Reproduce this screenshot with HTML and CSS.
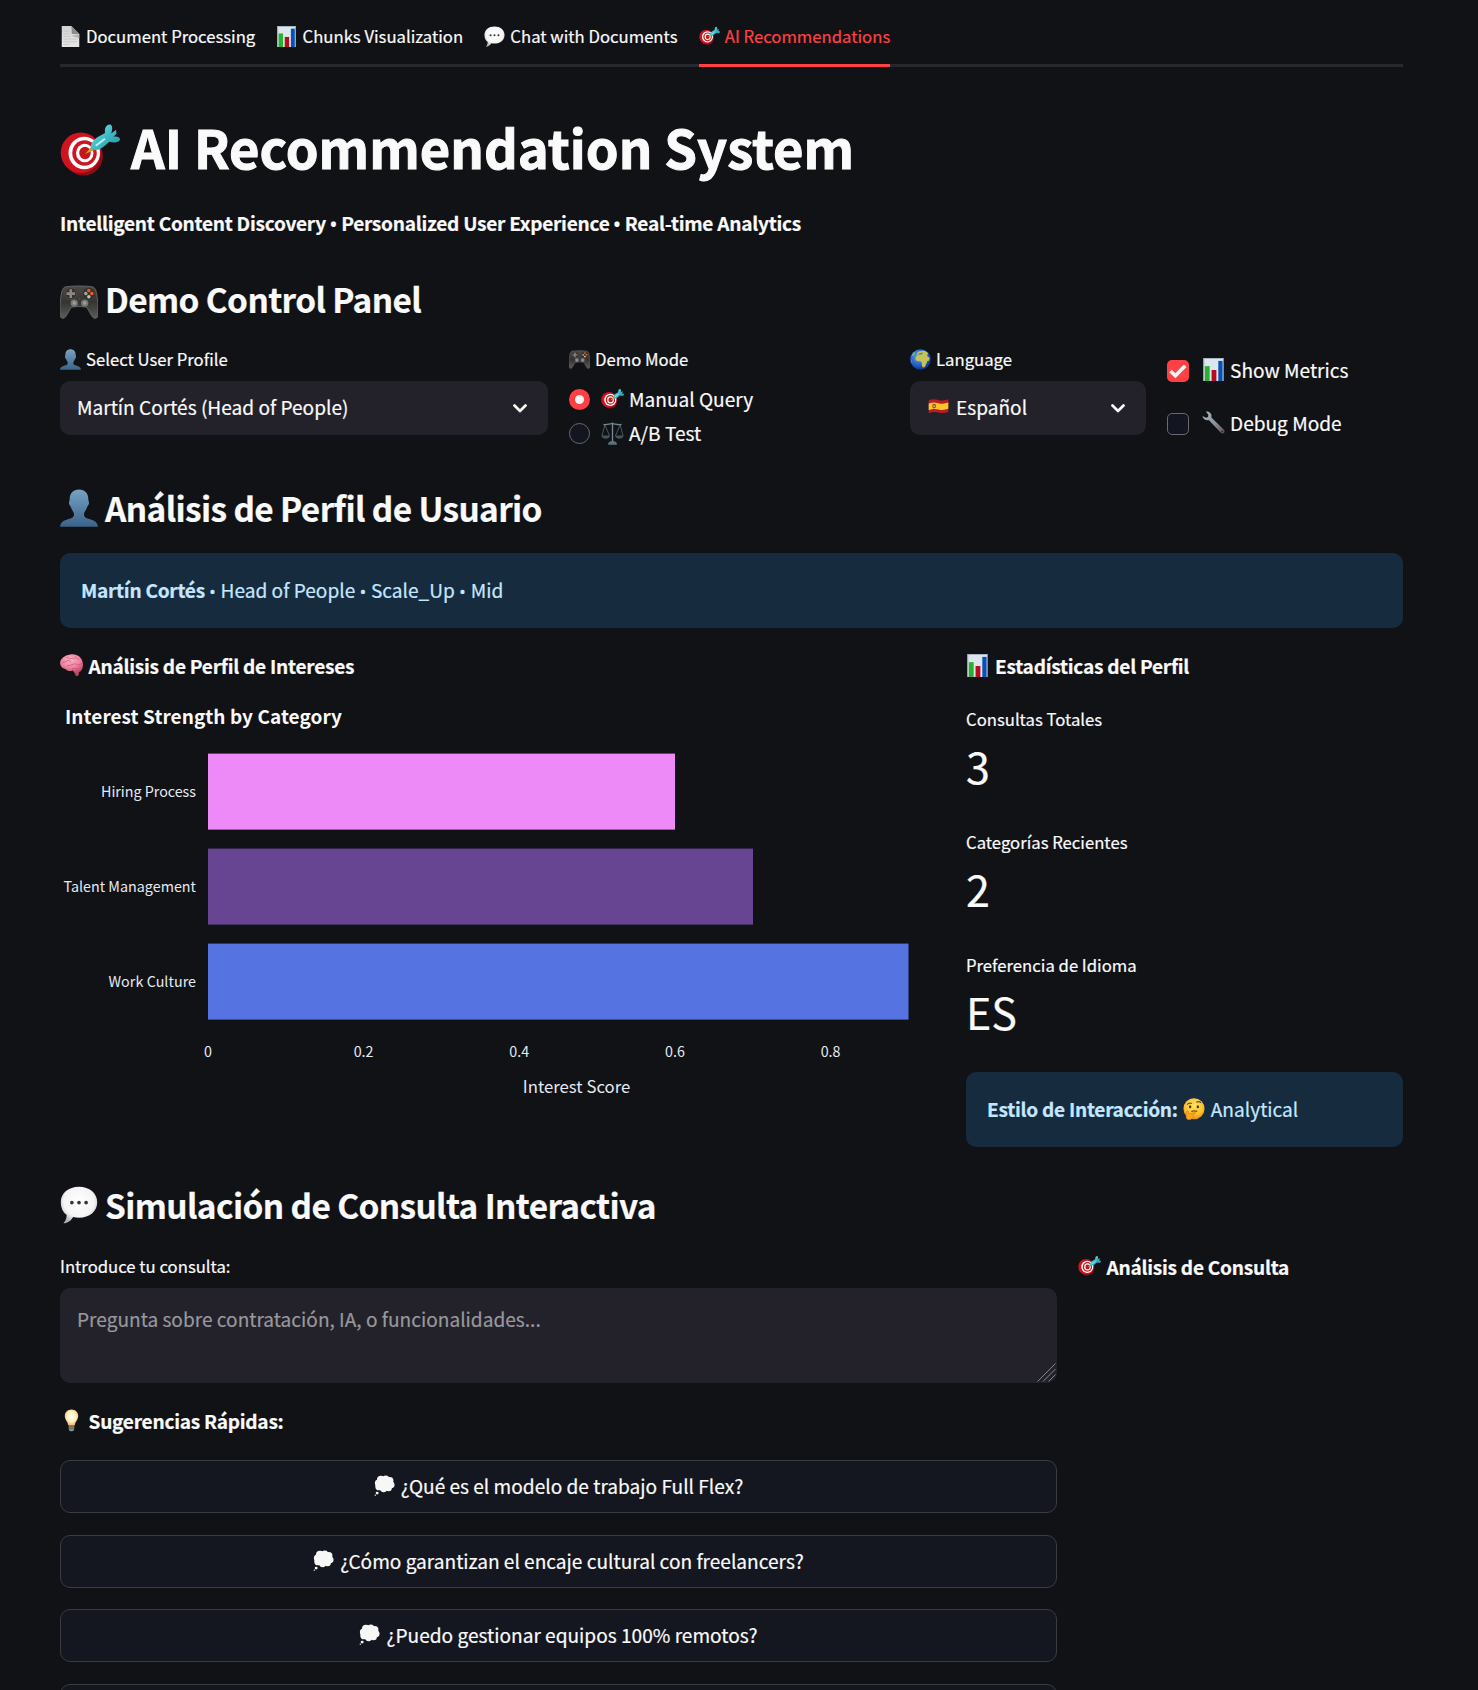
FILE: index.html
```html
<!DOCTYPE html>
<html lang="es">
<head>
<meta charset="utf-8">
<title>AI Recommendation System</title>
<link rel="stylesheet" href="styles.css">
</head>
<body>
<svg class="defs" aria-hidden="true">
  <defs>
    <linearGradient id="gPaper" x1="0" y1="0" x2="0" y2="1"><stop offset="0" stop-color="#d2d2d2"/><stop offset="1" stop-color="#e6e6e6"/></linearGradient>
    <linearGradient id="gMan" x1="0" y1="0" x2="0" y2="1"><stop offset="0" stop-color="#77a3c4"/><stop offset="1" stop-color="#3c6288"/></linearGradient>
    <radialGradient id="gWhite" cx=".5" cy=".4" r=".6"><stop offset="0" stop-color="#fff"/><stop offset=".7" stop-color="#f4f4f4"/><stop offset="1" stop-color="#b4b4b4"/></radialGradient>
    <linearGradient id="gPad" x1="0" y1="0" x2="0" y2="1"><stop offset="0" stop-color="#4a4b48"/><stop offset=".5" stop-color="#343533"/><stop offset="1" stop-color="#5c5d5a"/></linearGradient>
    <radialGradient id="gSea" cx=".4" cy=".35" r=".7"><stop offset="0" stop-color="#62a5ec"/><stop offset=".6" stop-color="#2460c8"/><stop offset="1" stop-color="#0e2c78"/></radialGradient>
    <radialGradient id="gFace" cx=".5" cy=".35" r=".65"><stop offset="0" stop-color="#ffe45c"/><stop offset=".7" stop-color="#fcc02d"/><stop offset="1" stop-color="#e88a18"/></radialGradient>
    <radialGradient id="gBulb" cx=".5" cy=".45" r=".6"><stop offset="0" stop-color="#fffef2"/><stop offset=".55" stop-color="#fff0c0"/><stop offset="1" stop-color="#e8b45c"/></radialGradient>
    <radialGradient id="gBrain" cx=".45" cy=".3" r=".7"><stop offset="0" stop-color="#fbb4c6"/><stop offset=".6" stop-color="#f0829f"/><stop offset="1" stop-color="#c2506f"/></radialGradient>
    <linearGradient id="gSteel" x1="0" y1="0" x2="1" y2="1"><stop offset="0" stop-color="#a9bac6"/><stop offset=".55" stop-color="#8693a0"/><stop offset="1" stop-color="#6c4a46"/></linearGradient>
    <linearGradient id="gDart" x1="0" y1="0" x2="1" y2="1"><stop offset="0" stop-color="#6fe3ea"/><stop offset="1" stop-color="#1593a5"/></linearGradient>
  </defs>
  <symbol id="doc" viewBox="0 0 24 24"><path d="M2 0h11l9 9v15H2z" fill="url(#gPaper)"/><path d="M13 0l9 9h-8.500z" fill="#8b8b8b"/><path d="M13 11l9-2v5z" fill="#b5b5b5"/><path d="M4 6h7M4 9h7M4 12h8M4 15h15M4 18h15M4 21h6" stroke="#c0c0c0" stroke-width=".8"/></symbol>
  <symbol id="bars" viewBox="0 0 24 24"><path d="M1.500 0h21v24h-21z" fill="#dbe6ef"/><path d="M1.500 0h1v24h-1zM1.500 0h21v1h-21z" fill="#a7b4c0"/><path d="M3 8.500h5V24H3z" fill="#27b22e"/><path d="M10 12.500h5V24h-5z" fill="#b70c20"/><path d="M17 3h4.500v21H17z" fill="#0a50b4"/></symbol>
  <symbol id="bubble" viewBox="0 0 24 24"><path d="M12 .5c6.600 0 11.500 4 11.500 9.700S18.800 20 12 20c-1.300 0-2.600-.1-3.700-.4C7 22 4.600 23.500 2.200 23.600c1.300-1.400 2-3.200 2-5.300C1.800 16.500.5 13.800.5 10.200.5 4.500 5.400.5 12 .5z" fill="url(#gWhite)"/><circle cx="7.500" cy="10.500" r="1.150" fill="#333"/><circle cx="12" cy="10.500" r="1.150" fill="#333"/><circle cx="16.500" cy="10.500" r="1.150" fill="#333"/></symbol>
  <symbol id="target" viewBox="0 0 24 24"><ellipse cx="9.200" cy="13.300" rx="7.900" ry="8.200" transform="rotate(-25 9.200 13.300)" fill="#8c0d16"/><ellipse cx="8.300" cy="12.300" rx="8" ry="8.100" fill="#d0141f"/><ellipse cx="9.700" cy="12.400" rx="6.300" ry="6.500" fill="#fff"/><ellipse cx="9.800" cy="12.400" rx="4.900" ry="5.100" fill="#cc1721"/><ellipse cx="9.900" cy="12.400" rx="3.500" ry="3.700" fill="#fff"/><ellipse cx="10" cy="12.400" rx="2.300" ry="2.500" fill="#c4161f"/><path d="M10 12.800l3-3.300 1.400 1.500z" fill="#d79a23"/><path d="M12.300 11c-.3-2 1-4 3-5.100l2.700-1.500C17.700 2.500 18.500.8 20.200 1c.9.500.8 2 .3 3.600l1.900-1.500.2 1.600-1.200 1.200c1.500-.3 2.700.2 2.600 1.200-.5 1.200-2.300 1.300-4.300.8l-1.800 1.600c-1.500 1.400-3.400 2.100-5.600 1.500z" fill="url(#gDart)"/><path d="M14.300 9.500l3.700-2.800" stroke="#b7f5f5" stroke-width=".8"/></symbol>
  <symbol id="pad" viewBox="0 0 24 24"><path d="M3.200 2.500C7 1.700 17 1.700 20.800 2.500c1.300.5 2 2 2.400 4.500.6 4 .9 8.500.8 12.500 0 3.300-2.600 3.700-4 1.200l-3-5.200c-1.400-.8-8.600-.8-10 0l-3 5.200c-1.400 2.500-4 2.100-4-1.200-.1-4 .2-8.500.8-12.500.4-2.500 1.100-4 2.400-4.500z" fill="url(#gPad)" stroke="#6d6e6b" stroke-width=".5"/><circle cx="6.800" cy="6.700" r="3.700" fill="#343330" stroke="#68463b" stroke-width=".5"/><path d="M6.800 4v5.400M4.100 6.700h5.400" stroke="#888986" stroke-width="1.600"/><circle cx="18.200" cy="6.700" r="3.700" fill="#343330"/><circle cx="18.200" cy="4.700" r="1.100" fill="#f4571c"/><circle cx="20.100" cy="6.700" r="1.100" fill="#ff5a1c"/><circle cx="16.300" cy="6.700" r="1.100" fill="#a6a6a4"/><circle cx="18.200" cy="8.700" r="1.100" fill="#c2c2c0"/><circle cx="9" cy="12.700" r="2.300" fill="#777875"/><circle cx="15.600" cy="12.700" r="2.300" fill="#777875"/><circle cx="9" cy="12.700" r="1.100" fill="#9c9d9a"/><circle cx="15.600" cy="12.700" r="1.100" fill="#9c9d9a"/><circle cx="12.300" cy="10" r=".6" fill="#9c3c1c"/></symbol>
  <symbol id="man" viewBox="0 0 24 24"><path d="M12 .3c3.700 0 5.900 2.400 5.900 6.200 0 1.300.6 1.500.4 2.800-.2 1-.9 1.200-1.200 2.200-.5 1.700-1.500 2.700-1.800 3.700-.4 1.700.2 2.900 2 3.500 3.500 1 6.200 1.600 6.700 5.100H0c.5-3.500 3.200-4.100 6.700-5.100 1.800-.6 2.400-1.800 2-3.500-.3-1-1.300-2-1.800-3.700-.3-1-1-1.200-1.200-2.200-.2-1.300.4-1.500.4-2.800C6.100 2.700 8.300.3 12 .3z" fill="url(#gMan)"/></symbol>
  <symbol id="globe" viewBox="0 0 24 24"><circle cx="12" cy="12" r="11.800" fill="url(#gSea)"/><path d="M8 4.500c2-2 6-2.800 9-2.200 1.600.7 3 1.700 4 3l-1.500 1.300.5 2 2.500 1.400-.8 3.300-2 .3c.2 1.500-1 2.500-1.500 4-.6 2-1.800 3.600-3.300 3.500-1.300-1-1.500-3.500-1.500-5.500-.6-1.500-2-1.800-3.500-1.600C7.600 14 6 12.500 6.200 10.500c.3-1.500 1.500-2.400 2.400-3.300z" fill="#c4c25a"/><path d="M10 5c2-.8 3.500-1 5-.6l-1.500 2-4 .4z" fill="#4f9860"/><path d="M2 7c.8-1.500 1.800-2.600 3-3.600L6 5 3.500 8zM1 12l1.300 2 .2 3z" fill="#89b27c"/></symbol>
  <symbol id="flag" viewBox="0 0 24 24"><path d="M.8 5C5 3.200 8 3.500 12 4.500s7.500.7 11.200-.7v14.400c-3.700 1.400-7.200 1.700-11.200.7S5 18 .8 19.700z" fill="#b81d23"/><path d="M.8 8.600c4.200-1.700 7.200-1.400 11.200-.4s7.500.7 11.200-.7v7.200c-3.700 1.400-7.200 1.700-11.200.7S5 14.400.8 16.100z" fill="#f7c52a"/><ellipse cx="7" cy="11.500" rx="2.200" ry="2.700" fill="#a84a2c"/><path d="M6 10.500h2v2H6z" fill="#d6a27a"/></symbol>
  <symbol id="scale" viewBox="0 0 24 24"><g fill="none" stroke="#5b6d77" stroke-width=".8"><path d="M4 3L1 14.500M4 3l5 11.500M20 3l-5 11.500M20 3l3 11.500"/><path d="M2.500 2.500C6 3.500 9 1.500 12 1.800s6 1.700 9.500.7" stroke="#758690" stroke-width="1.300"/></g><path d="M.3 14.200h9.200c-.8 2.800-2.500 3.300-4.600 3.300S1 17 .3 14.200zM14.500 14.200h9.200c-.8 2.800-2.500 3.300-4.600 3.300s-3.800-.5-4.600-3.300z" fill="#43545e"/><path d="M11.300.5h1.400v19.800h-1.400z" fill="#778994"/><path d="M7.500 22.200c1-2 3-2.300 4.500-2.300s3.500.3 4.500 2.300v1.500h-9z" fill="#5c707c"/></symbol>
  <symbol id="wrench" viewBox="0 0 24 24"><path d="M4.200.8c2.200-.8 5.600 1.200 5.800 4.200l-.2 1.700L22.600 19.400c1.700 1.700.8 4-1.200 4-.9 0-1.500-.4-2-.9L7 9.300c-2.500.8-5.800-.5-6.500-4.200L4 7l2.300-.7L6.600 4z" fill="url(#gSteel)"/><circle cx="21.100" cy="21.300" r=".9" fill="#2a2225"/></symbol>
  <symbol id="brain" viewBox="0 0 24 24"><path d="M14 17.500l6 1-.5 3.500c-1 1.500-3 1.500-3.500 0z" fill="#a84a60"/><path d="M10.500.6c7-1.300 12.800 2.800 13.400 9.500.4 5.500-2 9-5.800 9.300-2.700.5-3.600-.9-4.800-2.300C10 18.600 7.200 17.500 6 15.800 2.300 15.400.1 12.400.1 9.500.2 5 4.700 1.500 10.500.6z" fill="url(#gBrain)"/><path d="M2 9.500c2-2 3.500-.5 5-2s3.500-1 4.300 1.200M6.500 3.500c2 0 2.500 2 4.500 1.500s3-1 4.500.7M7 13c2-2 4-.5 5.500-1.700s3.500-1.500 5.500-.4 3.500-.7 4.500-1.200M12.500 15c2 1 4.500-.6 6 .7M15.500 2.500c.3 2 2.500 1.800 4 3.200" fill="none" stroke="#c85778" stroke-width=".8"/></symbol>
  <symbol id="think" viewBox="0 0 24 24"><circle cx="12" cy="11.700" r="11.500" fill="url(#gFace)"/><path d="M4.500 7.200c1-1.500 3.200-1.900 5.300-1.300M14.500 4.500c2-.9 3.800-.6 5.200.7" fill="none" stroke="#7b4817" stroke-width="1.200"/><ellipse cx="7.800" cy="9.500" rx="1.300" ry="1.700" fill="#573016"/><ellipse cx="16.200" cy="9.500" rx="1.300" ry="1.700" fill="#573016"/><path d="M9 14.800c2.500-1.200 4.500-.9 6.500-.2" stroke="#7b4817" stroke-width="1.200" fill="none"/><path d="M4 14.500c.8-1.200 1.800-.6 2 .5l.5 2.500 6-1.900c1.400-.3 1.800 1.200.6 1.700l-2.700 1.200c1.500.2 1.700 1.200.8 2.100-1.500 2.500-3.800 3.700-6 2.900-2.200-1-2.200-4-1.200-9z" fill="#f8a51f" stroke="#d87513" stroke-width=".5"/></symbol>
  <symbol id="bulb" viewBox="0 0 24 24"><path d="M8.800 15.500h6.400l-.5 6.500c-.9 1.700-4.500 1.700-5.400 0z" fill="#8d8b86"/><path d="M9 18h6M9.200 20.200h5.600" stroke="#4c4b49" stroke-width=".7"/><path d="M12 .5c4.200 0 7 3 7 6.700 0 4-3.200 5.800-3.500 9.600h-7C8.200 13 5 11.200 5 7.200 5 3.500 7.800.5 12 .5z" fill="url(#gBulb)"/></symbol>
  <symbol id="cloud" viewBox="0 0 24 24"><g fill="#f7f7f7"><circle cx="8" cy="5.500" r="4.600"/><circle cx="13.500" cy="4.500" r="4"/><circle cx="18" cy="6.500" r="4.200"/><circle cx="19.600" cy="11.200" r="3.900"/><circle cx="16.500" cy="14.700" r="4"/><circle cx="11" cy="15.800" r="3.900"/><circle cx="6" cy="13" r="4.500"/><circle cx="5" cy="9" r="4"/><circle cx="12.500" cy="10" r="6"/><circle cx="3.600" cy="20.700" r="1.700"/><circle cx="1.500" cy="23" r=".8"/></g></symbol>
  <symbol id="chev" viewBox="0 0 14 9"><path d="M1.500 1.500L7 7l5.500-5.500" fill="none" stroke="#fafafa" stroke-width="2.700" stroke-linecap="round" stroke-linejoin="round"/></symbol>
</svg>

<main class="page">
  <nav class="tabs">
    <a class="tab"><svg class="ico"><use href="#doc"/></svg><span>Document Processing</span></a>
    <a class="tab chunks"><svg class="ico"><use href="#bars"/></svg><span>Chunks Visualization</span></a>
    <a class="tab"><svg class="ico"><use href="#bubble"/></svg><span>Chat with Documents</span></a>
    <a class="tab active"><svg class="ico"><use href="#target"/></svg><span>AI Recommendations</span></a>
  </nav>

  <h1 class="title"><svg class="ico"><use href="#target"/></svg><span>AI Recommendation System</span></h1>
  <p class="tagline">Intelligent Content Discovery <i class="dot">•</i> Personalized User Experience <i class="dot">•</i> Real-time Analytics</p>

  <h2 class="section demo"><svg class="ico"><use href="#pad"/></svg><span>Demo Control Panel</span></h2>
  <div class="controls">
    <div class="field">
      <label class="label"><svg class="ico"><use href="#man"/></svg><span>Select User Profile</span></label>
      <div class="select"><span>Martín Cortés (Head of People)</span><svg class="chev"><use href="#chev"/></svg></div>
    </div>
    <div class="field">
      <label class="label"><svg class="ico"><use href="#pad"/></svg><span>Demo Mode</span></label>
      <div class="radios">
        <div class="option"><i class="radio on"></i><svg class="ico"><use href="#target"/></svg><span>Manual Query</span></div>
        <div class="option"><i class="radio"></i><svg class="ico"><use href="#scale"/></svg><span>A/B Test</span></div>
      </div>
    </div>
    <div class="field">
      <label class="label"><svg class="ico"><use href="#globe"/></svg><span>Language</span></label>
      <div class="select"><svg class="ico flag"><use href="#flag"/></svg><span>Español</span><svg class="chev"><use href="#chev"/></svg></div>
    </div>
    <div class="checks">
      <div class="option"><i class="check on"><svg viewBox="0 0 21 21"><path d="M3.300 10.500l4.700 4.500L17.300 5.500" fill="none" stroke="#f4f4f6" stroke-width="3.500"/></svg></i><svg class="ico"><use href="#bars"/></svg><span>Show Metrics</span></div>
      <div class="option"><i class="check"></i><svg class="ico"><use href="#wrench"/></svg><span>Debug Mode</span></div>
    </div>
  </div>

  <h2 class="section analysis"><svg class="ico"><use href="#man"/></svg><span>Análisis de Perfil de Usuario</span></h2>
  <div class="info"><p><b>Martín Cortés</b> <i class="dot">•</i> Head of People <i class="dot">•</i> Scale_Up <i class="dot">•</i> Mid</p></div>

  <div class="profile">
    <section class="interests">
      <h3 class="sub"><svg class="ico"><use href="#brain"/></svg><span>Análisis de Perfil de Intereses</span></h3>
      <svg class="chart" width="885" height="430" viewBox="60 690 885 430">
        <text class="chart-title" x="65" y="724" textLength="277">Interest Strength by Category</text>
        <rect x="208" y="753.600" width="467" height="76" fill="#ee8af7"/>
        <rect x="208" y="848.600" width="545" height="76" fill="#684593"/>
        <rect x="208" y="943.600" width="700.500" height="76" fill="#5674e1"/>
        <g class="axis" text-anchor="end">
          <text x="196" y="797" textLength="95">Hiring Process</text>
          <text x="196" y="892" textLength="132.500">Talent Management</text>
          <text x="196" y="987" textLength="87.500">Work Culture</text>
        </g>
        <g class="axis" text-anchor="middle">
          <text x="208" y="1057">0</text><text x="363.600" y="1057">0.2</text><text x="519.300" y="1057">0.4</text><text x="675" y="1057">0.6</text><text x="830.600" y="1057">0.8</text>
          <text class="axis-title" x="576.500" y="1093" textLength="107.500">Interest Score</text>
        </g>
      </svg>
    </section>
    <section class="stats">
      <h3 class="sub"><svg class="ico"><use href="#bars"/></svg><span>Estadísticas del Perfil</span></h3>
      <div class="metric"><div class="label">Consultas Totales</div><div class="value">3</div></div>
      <div class="metric"><div class="label">Categorías Recientes</div><div class="value">2</div></div>
      <div class="metric"><div class="label">Preferencia de Idioma</div><div class="value">ES</div></div>
      <div class="info style"><b>Estilo de Interacción:</b><svg class="ico"><use href="#think"/></svg><span>Analytical</span></div>
    </section>
  </div>

  <h2 class="section query"><svg class="ico"><use href="#bubble"/></svg><span>Simulación de Consulta Interactiva</span></h2>
  <div class="ask">
    <section class="ask-main">
      <label class="label">Introduce tu consulta:</label>
      <div class="textarea"><span>Pregunta sobre contratación, IA, o funcionalidades...</span><svg class="grip" viewBox="0 0 19 19"><path d="M.5 18.500l18-18M6 18.500L18.500 6M11.500 18.500l7-7" stroke="#85858a" stroke-width="1"/></svg></div>
      <h3 class="sub quick"><svg class="ico"><use href="#bulb"/></svg><span>Sugerencias Rápidas:</span></h3>
      <div class="suggestions">
        <button><svg class="ico"><use href="#cloud"/></svg><span>¿Qué es el modelo de trabajo Full Flex?</span></button>
        <button><svg class="ico"><use href="#cloud"/></svg><span>¿Cómo garantizan el encaje cultural con freelancers?</span></button>
        <button><svg class="ico"><use href="#cloud"/></svg><span>¿Puedo gestionar equipos 100% remotos?</span></button>
        <button></button>
      </div>
    </section>
    <section class="ask-side">
      <h3 class="sub"><svg class="ico"><use href="#target"/></svg><span>Análisis de Consulta</span></h3>
    </section>
  </div>
</main>
</body>
</html>
```
FILE: styles.css
```css
* { box-sizing: border-box; margin: 0; padding: 0; }
html, body { height: 1690px; overflow: hidden; background: #111216; }
body {
  color: #fafafa;
  font: 400 19.1px/1 "Noto Sans CJK SC", "Noto Sans CJK JP", "Noto Sans", sans-serif;
  white-space: nowrap;
  -webkit-text-stroke: .2px currentColor;
}
b { letter-spacing: -.27px; }
.defs { position: absolute; width: 0; height: 0; }
.page { width: 1343px; margin-left: 60px; }
.ico { width: 21px; height: 21px; flex: none; }
.dot { display: inline-block; width: 7.200px; font-family: "Noto Sans", sans-serif; font-style: normal; font-size: 17px; line-height: 1; text-align: center; text-indent: -.5px; }

.tabs { display: flex; height: 67px; gap: 21.300px; box-shadow: inset 0 -3px #27282e; }
.tab { display: flex; align-items: center; height: 67px; padding-top: 4px; font-size: 16.700px; line-height: 28px; }
.tab .ico { margin: 2px 5px 0 0; }
.chunks .ico { margin: 2px 6px 0 -1px; }
.tab.active { color: #ff4144; box-shadow: inset 0 -3px #ff4144; }

.title { display: flex; align-items: center; height: 70px; margin-top: 44px; font-size: 52.500px; font-weight: 700; line-height: 70px; -webkit-text-stroke: 1px currentColor; }
.title .ico { width: 60px; height: 60px; margin: 11px 11px 0 0; }
.tagline { height: 32px; margin-top: 26px; line-height: 32px; font-weight: 700; letter-spacing: -.27px; }

.section { display: flex; align-items: center; height: 45px; font-size: 33.400px; font-weight: 700; line-height: 45px; letter-spacing: -.62px; }
.section .ico { width: 38px; height: 38px; margin-right: 7px; }
.demo { margin-top: 37px; }
.demo .ico { margin-top: 6px; }
.analysis { margin-top: 41px; }
.query { margin-top: 35px; }

.controls { display: grid; grid-template-columns: 488px 320px 236px 236px; column-gap: 21px; height: 99px; margin-top: 24px; }
.label { display: flex; align-items: center; height: 28px; font-size: 16.700px; line-height: 28px; }
.label .ico { margin-right: 5px; }
.select { display: flex; align-items: center; height: 54px; margin-top: 8px; padding: 0 21px 0 17px; border-radius: 10px; background: #23222b; line-height: 50px; }
.select span { margin-top: -2px; }
.select .flag { margin: -3px 7px 0 1px; }
.chev { width: 14px; height: 9px; margin-left: auto; }
.radios { margin-top: 9.500px; }
.option { display: flex; align-items: center; height: 34px; line-height: 32px; }
.option span { margin-top: -2px; }
.option .ico { width: 23px; height: 23px; margin: 0 5px 0 11px; }
.radio { width: 21px; height: 21px; border: 1px solid #686970; border-radius: 50%; background: #131620; }
.radio.on { border: 6.500px solid #ff4144; background: #f4f4f6; }
.checks { margin-top: -1px; }
.checks .option { height: 53.500px; }
.check { width: 22px; height: 22px; border: 1px solid #686970; border-radius: 5px; background: #131620; }
.check.on { border: 0; background: #ff4144; }
.check svg { display: block; width: 22px; height: 22px; }
.checks .option .ico { margin: -3px 5px 0 13px; }

.info { display: flex; align-items: center; height: 75px; margin-top: 23px; padding: 0 21px; border-radius: 10px; background: #172b3f; color: #c3e7ff; }
.profile { display: grid; grid-template-columns: 885px 437px; column-gap: 21px; height: 498px; margin-top: 21px; }
.sub { display: flex; align-items: center; height: 33px; font-size: 19.100px; font-weight: 700; line-height: 33px; letter-spacing: -.25px; }
.sub span { margin-top: 2px; }
.sub .ico { width: 23px; height: 23px; margin: 0 5.500px 0 0; }
.chart { display: block; margin-top: 8px; }
.chart text { fill: #e6eaf1; }
.chart .chart-title { font-size: 19px; font-weight: 700; fill: #fafafa; -webkit-text-stroke: .4px #fafafa; }
.axis { font-size: 14.300px; }
.axis .axis-title { font-size: 16.700px; }
.metric { height: 123px; }
.stats .sub { margin-bottom: 22.500px; }
.stats .sub .ico { margin-right: 6px; }
.value { height: 65px; font-size: 43px; line-height: 65px; }
.style { margin-top: -1.500px; }
.style .ico { width: 22px; height: 22px; margin: -2px 6px 0 5px; }

.ask { display: grid; grid-template-columns: 997px 324px; column-gap: 21px; margin-top: 24.500px; }
.textarea { position: relative; height: 95px; margin-top: 8.500px; padding: 16px 17px; border-radius: 10px; background: #23222b; color: #98989d; line-height: 30px; }
.grip { position: absolute; right: 1px; bottom: 1px; width: 19px; height: 19px; }
.quick { margin-top: 21px; }
.ask-side .sub { margin-top: -2px; }
.suggestions { display: flex; flex-direction: column; gap: 21.700px; margin-top: 23px; }
.suggestions button { display: flex; align-items: center; justify-content: center; flex: none; height: 53px; border: 1px solid #3b3c43; border-radius: 10px; background: #141720; color: #fafafa; font: inherit; }
.suggestions .ico { margin: -2px 6px 0 0; }
```
